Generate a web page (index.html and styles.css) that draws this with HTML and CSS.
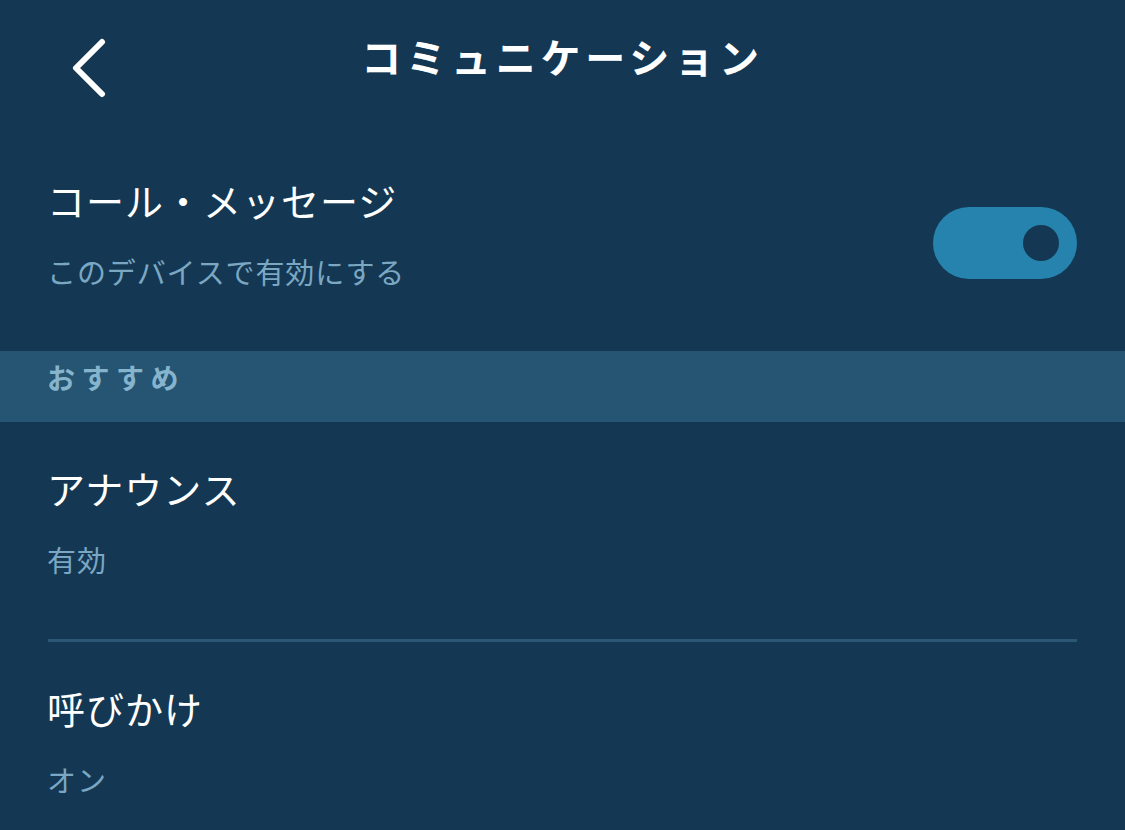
FILE: index.html
```html
<!DOCTYPE html>
<html lang="ja">
<head>
<meta charset="utf-8">
<title>コミュニケーション</title>
<link rel="stylesheet" href="styles.css">
</head>
<body>
<div class="screen">
  <header class="header">
    <div class="back">
      <svg width="40" height="62" viewBox="0 0 40 62">
        <polyline points="32,4 6,30 32,56" fill="none" stroke="#ffffff" stroke-width="6" stroke-linecap="round" stroke-linejoin="round"/>
      </svg>
    </div>
    <h1 class="title">コミュニケーション</h1>
    <div class="spacer"></div>
  </header>

  <section class="row row-toggle">
    <div class="row-text">
      <div class="row-title">コール・メッセージ</div>
      <div class="row-sub">このデバイスで有効にする</div>
    </div>
    <div class="toggle"><span class="knob"></span></div>
  </section>

  <div class="band">おすすめ</div>

  <section class="row">
    <div class="row-text">
      <div class="row-title">アナウンス</div>
      <div class="row-sub">有効</div>
    </div>
  </section>
  <div class="divider"></div>
  <section class="row">
    <div class="row-text">
      <div class="row-title">呼びかけ</div>
      <div class="row-sub">オン</div>
    </div>
  </section>
</div>
</body>
</html>
```
FILE: styles.css
```css
* { box-sizing: border-box; }
html, body {
  margin: 0;
  padding: 0;
  background: #143853;
}
body {
  font-family: "Noto Sans CJK JP", "Noto Sans", sans-serif;
  color: #ffffff;
  width: 1125px;
  height: 830px;
  overflow: hidden;
}
.screen {
  display: flex;
  flex-direction: column;
}
.header {
  height: 134px;
  display: grid;
  grid-template-columns: 1fr auto 1fr;
  align-items: start;
}
.back {
  padding-left: 70px;
  padding-top: 38px;
  display: flex;
}
.title {
  margin: 0;
  padding-top: 31px;
  font-size: 40px;
  line-height: 50px;
  font-weight: 700;
  letter-spacing: 4.8px;
  color: #ffffff;
}
.row {
  height: 217px;
  padding: 43px 48px 0 47px;
  display: flex;
  align-items: flex-start;
  justify-content: space-between;
}
.row-text {
  display: flex;
  flex-direction: column;
  gap: 30px;
}
.row-title {
  font-size: 38px;
  line-height: 46px;
  font-weight: 400;
  letter-spacing: 1px;
  color: #ffffff;
}
.row-sub {
  font-size: 29px;
  line-height: 36px;
  letter-spacing: 0.9px;
  color: #7ba7c3;
}
.toggle {
  margin-top: 30px;
  width: 144px;
  height: 72px;
  border-radius: 36px;
  background: #2583ae;
  display: flex;
  align-items: center;
  justify-content: flex-end;
  padding-right: 18px;
}
.knob {
  width: 36px;
  height: 36px;
  border-radius: 50%;
  background: #143853;
}
.band {
  height: 71px;
  background: #255573;
  padding: 9px 0 0 47px;
  font-size: 28px;
  line-height: 34px;
  font-weight: 700;
  letter-spacing: 6.5px;
  color: #86b4cd;
}
.divider {
  height: 3px;
  margin: 0 48px;
  background: #2b5676;
}
```
